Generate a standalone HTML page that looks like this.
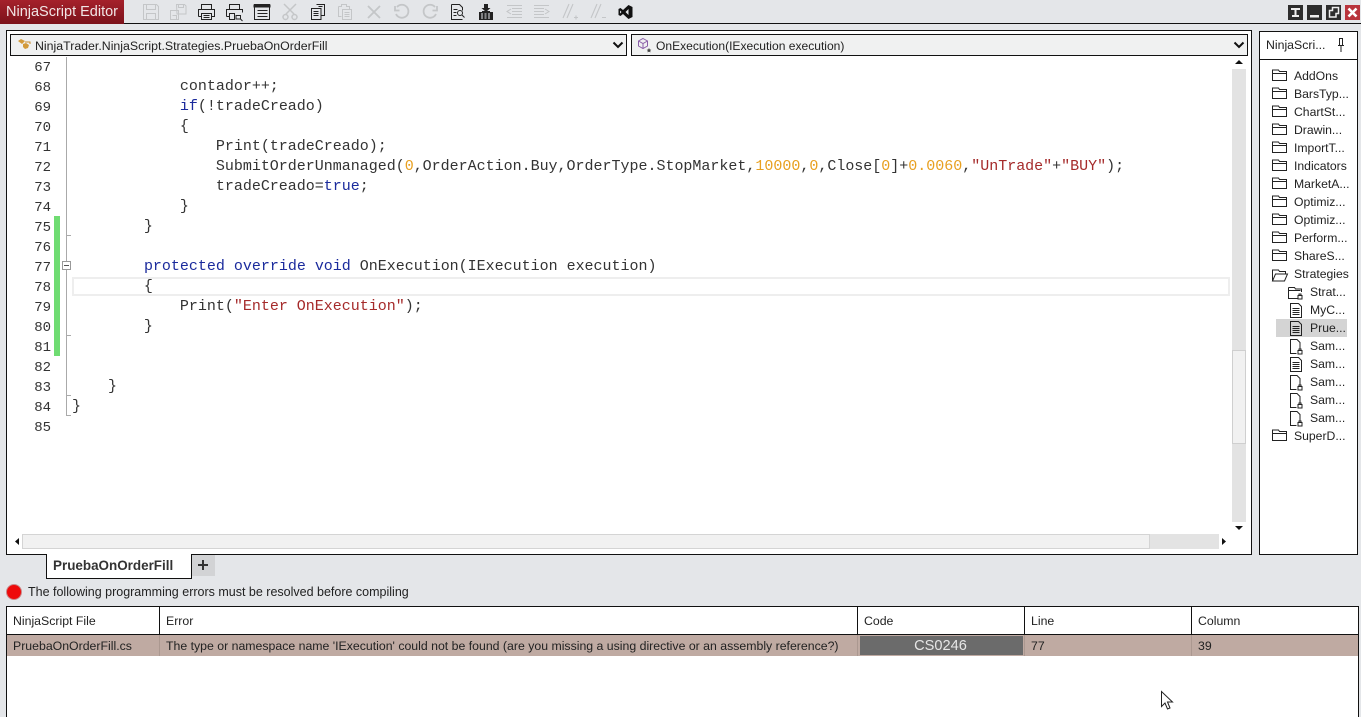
<!DOCTYPE html>
<html><head><meta charset="utf-8"><title>NinjaScript Editor</title>
<style>
*{box-sizing:border-box}
html,body{margin:0;padding:0;width:1361px;height:717px;overflow:hidden;background:#e4e6e9;font-family:"Liberation Sans",sans-serif;color:#222}
.a{position:absolute}
pre{margin:0;font:15px/20px "Liberation Mono",monospace;color:#333}
.k{color:#1a2a9c}.s{color:#a52a2a}.n{color:#e8a020}
.t{position:absolute;font-size:12.2px;line-height:18px;white-space:nowrap;color:#222}
.c{position:absolute;font-size:12.3px;line-height:16px;white-space:nowrap;color:#222}
.ln{position:absolute;left:20px;width:31px;text-align:right;font:14px/20px "Liberation Mono",monospace;color:#333}
</style></head><body>
<!-- title -->
<div class="a" style="left:0;top:23px;width:1361px;height:1px;background:#111"></div>
<div class="a" style="left:0;top:0;width:124px;height:24px;background:linear-gradient(#a5212b,#7b121b)"></div>
<div class="a" style="left:6px;top:3px;font-size:14.5px;line-height:18px;color:#f1e6e6;white-space:nowrap">NinjaScript Editor</div>
<!-- toolbar icons -->
<svg class="a" style="left:135px;top:0" width="510" height="23" viewBox="135 0 510 23" fill="none" stroke-width="1">
<g stroke="#c4c6c8">
<path d="M143.500 4.500h13l2 2v13h-15zM146.500 4.500v5h9v-5M146.500 19.500v-6h9v6"/>
<path d="M176.500 4.500h8l1.500 1.500v8h-9zM178.500 4.500v3h5v-3M170.500 10.500h8v9h-8zM172.500 15.500h4v4"/>
</g>
<g stroke="#222">
<path d="M201.500 9.500v-5h10v5M198.500 16.500v-7h16v7h-3M201.500 16.500h-3M201.500 13.500h10v6h-10zM203.500 15.500h6M203.500 17.500h6"/>
<path d="M229.500 9.500v-5h10v5M226.500 16.500v-7h16v3M229.500 16.500h-3M229.500 13.500h5v6h-5z"/>
<path d="M236 15.500h4.500v3.500h-4.500z M240.500 19l2 2"/>
<path d="M254.500 4.500h15v15h-15zM257.500 10.500h10M257.500 13.500h10M257.500 16.500h10"/>
<path d="M254 5h16v2H254z" fill="#222"/>
</g>
<g stroke="#c4c6c8" stroke-width="1.500">
<path d="M284 4l10 10M296 4l-10 10"/><circle cx="285.500" cy="17" r="2.500"/><circle cx="294.500" cy="17" r="2.500"/>
</g>
<g stroke="#222">
<path d="M316.500 4.500h8v11h-3M311.500 8.500h9.500v11h-9.500zM313.500 11.500h5M313.500 13.500h5M313.500 15.500h5M318.500 6.500h4"/>
</g>
<g stroke="#c4c6c8">
<path d="M338.500 6.500h3v-2h5v2h3v3M338.500 6.500v10h3M342.500 9.500h9v10h-9zM344.500 12.500h5M344.500 14.500h5M344.500 16.500h5"/>
</g>
<g stroke="#c4c6c8" stroke-width="1.800">
<path d="M368 6l12 12M380 6l-12 12"/>
<path d="M397 7a6.500 6.500 0 1 1-1 7M395 6v4.500h4.500"/>
<path d="M435 7a6.500 6.500 0 1 0 1 7M437 6v4.500h-4.500"/>
</g>
<g stroke="#222">
<path d="M451.500 4.500h8l3 3v3M451.500 4.500v15h11M453.500 9.500h4M453.500 12.500h3M453.500 15.500h3"/>
<circle cx="460" cy="13" r="2.500"/><path d="M462 15l2.500 2.500"/>
</g>
<path d="M484 4h4v4h2.500l-4.500 4-4.500-4h2.500z" fill="#222"/>
<path d="M479 12h3v-1h8v1h3v8h-14z" fill="#222"/>
<path d="M481 14h2M484.500 14h2M488 14h2M481 16h2M484.500 16h2M488 16h2M481 18h2M484.500 18h2M488 18h2" stroke="#e4e6e9"/>
<g stroke="#c4c6c8">
<path d="M507 5.500h15M512 8.500h10M512 11.500h10M512 14.500h10M507 17.500h15M511 9l-4 2.500 4 2.500"/>
<path d="M534 5.500h15M534 8.500h10M534 11.500h10M534 14.500h10M534 17.500h15M545 9l4 2.500-4 2.500"/>
<path d="M563 18l6-14M567 18l6-14M574 17.500h4M576 15.500v4" stroke-width="1.100"/>
<path d="M591 18l6-14M595 18l6-14M602 17.500h4" stroke-width="1.100"/>
</g>
<path d="M628.500 5l4 2v10l-4 2-5.500-5-2.500 2-2-1v-6l2-1 2.500 2zM628.500 9l-3 3 3 3zM620 10.500v3l1.500-1.500z" fill="#111" fill-rule="evenodd"/>
</svg>
<!-- window buttons -->
<svg class="a" style="left:1285px;top:3px" width="76" height="18" viewBox="0 0 76 18">
<rect x="3" y="2" width="15" height="15" fill="#2d2d2d"/><path d="M6 5h9v2H6zM9.500 7h2v5h-2zM7 12h7v2H7z" fill="#eee"/>
<rect x="22" y="2" width="15" height="15" fill="#2d2d2d"/><path d="M25 12h9v2.500h-9z" fill="#eee"/>
<rect x="41" y="2" width="15" height="15" fill="#2d2d2d"/><path d="M47.500 4.500h6v6h-2.500v3.500h-6.500v-6.500h3z" fill="none" stroke="#eee" stroke-width="1.500"/>
<rect x="60" y="2" width="15" height="15" fill="#b9343c"/><path d="M63.500 5.500l8 8M71.500 5.500l-8 8" stroke="#fff" stroke-width="2.600"/>
</svg>
<!-- editor panel -->
<div class="a" style="left:6px;top:30px;width:1246px;height:525px;background:#fff;border:1px solid #111"></div>
<!-- dropdowns -->
<div class="a" style="left:10px;top:34px;width:617px;height:22px;background:#f0f1f1;border:1px solid #111"></div>
<div class="a" style="left:631px;top:34px;width:617px;height:22px;background:#f0f1f1;border:1px solid #111"></div>
<svg class="a" style="left:16px;top:37px" width="16" height="16" viewBox="0 0 16 16"><path d="M2 4l3-2 4 2 -3 3zM7 7l3-1 3 2-1 3-3 1-2-2z" fill="#d39a3a"/><path d="M9 5h5v2" stroke="#c98a2a" fill="none"/></svg>
<div class="a" style="left:35px;top:37px;font-size:12.35px;line-height:18px;white-space:nowrap;color:#222">NinjaTrader.NinjaScript.Strategies.PruebaOnOrderFill</div>
<svg class="a" style="left:612px;top:41px" width="12" height="9" viewBox="0 0 12 9"><path d="M1.500 1.500L6 6l4.500-4.500" fill="none" stroke="#111" stroke-width="2"/></svg>
<svg class="a" style="left:637px;top:37px" width="16" height="16" viewBox="0 0 16 16"><path d="M6 1.500l4.500 2.500v5l-4.500 2.500-4.500-2.500v-5zM1.500 4l4.500 2.500 4.500-2.500M6 6.500v5" fill="none" stroke="#8a5fa8"/><path d="M12 11l.8 1.500 1.500.3-1.100 1 .3 1.600-1.500-.8-1.500.8.300-1.600-1.100-1 1.500-.3z" fill="#444"/></svg>
<div class="a" style="left:656px;top:37px;font-size:12.07px;line-height:18px;white-space:nowrap;color:#222">OnExecution(IExecution execution)</div>
<svg class="a" style="left:1233px;top:41px" width="12" height="9" viewBox="0 0 12 9"><path d="M1.500 1.500L6 6l4.500-4.500" fill="none" stroke="#111" stroke-width="2"/></svg>
<!-- gutter -->
<div class="a" style="left:54px;top:216px;width:6px;height:140px;background:#6fdc72"></div>
<div class="a" style="left:66px;top:57px;width:1px;height:358px;background:#aaa"></div>
<div class="a" style="left:66px;top:235px;width:5px;height:1px;background:#aaa"></div>
<div class="a" style="left:66px;top:335px;width:5px;height:1px;background:#aaa"></div>
<div class="a" style="left:66px;top:395px;width:5px;height:1px;background:#aaa"></div>
<div class="a" style="left:66px;top:415px;width:5px;height:1px;background:#aaa"></div>
<div class="a" style="left:62px;top:261px;width:9px;height:9px;background:#fff;border:1px solid #999"></div>
<div class="a" style="left:64px;top:265px;width:5px;height:1px;background:#555"></div>
<div class="a" style="left:72px;top:277px;width:1158px;height:19px;border:2px solid #eee"></div>
<div class="ln" style="top:58px">67</div><div class="ln" style="top:78px">68</div><div class="ln" style="top:98px">69</div><div class="ln" style="top:118px">70</div><div class="ln" style="top:138px">71</div><div class="ln" style="top:158px">72</div><div class="ln" style="top:178px">73</div><div class="ln" style="top:198px">74</div><div class="ln" style="top:218px">75</div><div class="ln" style="top:238px">76</div><div class="ln" style="top:258px">77</div><div class="ln" style="top:278px">78</div><div class="ln" style="top:298px">79</div><div class="ln" style="top:318px">80</div><div class="ln" style="top:338px">81</div><div class="ln" style="top:358px">82</div><div class="ln" style="top:378px">83</div><div class="ln" style="top:398px">84</div><div class="ln" style="top:418px">85</div>
<!-- code -->
<pre class="a" style="left:72px;top:57px;letter-spacing:-.01px">

            contador++;
            <span class="k">if</span>(!tradeCreado)
            {
                Print(tradeCreado);
                SubmitOrderUnmanaged(<span class="n">0</span>,OrderAction.Buy,OrderType.StopMarket,<span class="n">10000</span>,<span class="n">0</span>,Close[<span class="n">0</span>]+<span class="n">0.0060</span>,<span class="s">"UnTrade"</span>+<span class="s">"BUY"</span>);
                tradeCreado=<span class="k">true</span>;
            }
        }

        <span class="k">protected</span> <span class="k">override</span> <span class="k">void</span> OnExecution(IExecution execution)
        {
            Print(<span class="s">"Enter OnExecution"</span>);
        }


    }
}</pre>
<!-- vertical scrollbar -->
<div class="a" style="left:1232px;top:57px;width:14px;height:477px;background:#e3e3e3"></div>
<div class="a" style="left:1232px;top:57px;width:14px;height:12px;background:#fff"></div>
<div class="a" style="left:1232px;top:522px;width:14px;height:12px;background:#fff"></div>
<div class="a" style="left:1232px;top:350px;width:14px;height:94px;background:#f1f1f1;border:1px solid #cfcfcf"></div>
<svg class="a" style="left:1232px;top:57px" width="14" height="477" viewBox="0 0 14 477"><path d="M7 3l4 4H3zM7 473l4-4H3z" fill="#111"/></svg>
<!-- horizontal scrollbar -->
<div class="a" style="left:12px;top:534px;width:1217px;height:15px;background:#fff"></div>
<div class="a" style="left:22px;top:534px;width:1197px;height:15px;background:#e3e3e3"></div>
<div class="a" style="left:22px;top:534px;width:1128px;height:15px;background:#f1f1f1;border:1px solid #d4d4d4"></div>
<svg class="a" style="left:12px;top:534px" width="1217" height="15" viewBox="0 0 1217 15"><path d="M3 7.500L7 4v7zM1214 7.500L1210 4v7z" fill="#111"/></svg>
<!-- right panel -->
<div class="a" style="left:1259px;top:31px;width:99px;height:524px;background:#fff;border:1px solid #111"></div>
<div class="a" style="left:1260px;top:59px;width:97px;height:1px;background:#111"></div>
<div class="a" style="left:1266px;top:37px;font-size:12.3px;line-height:17px;white-space:nowrap;color:#222">NinjaScri...</div>
<svg class="a" style="left:1336px;top:37px" width="10" height="16" viewBox="0 0 10 16"><path d="M3.500 1.500h3v7h-3zM2 8.500h6M5 9v6" fill="none" stroke="#222"/></svg>
<div class="a" style="left:1276px;top:319px;width:71px;height:18px;background:#d4d4d4"></div>
<div class="t" style="left:1294px;top:67px">AddOns</div>
<div class="t" style="left:1294px;top:85px">BarsTyp...</div>
<div class="t" style="left:1294px;top:103px">ChartSt...</div>
<div class="t" style="left:1294px;top:121px">Drawin...</div>
<div class="t" style="left:1294px;top:139px">ImportT...</div>
<div class="t" style="left:1294px;top:157px">Indicators</div>
<div class="t" style="left:1294px;top:175px">MarketA...</div>
<div class="t" style="left:1294px;top:193px">Optimiz...</div>
<div class="t" style="left:1294px;top:211px">Optimiz...</div>
<div class="t" style="left:1294px;top:229px">Perform...</div>
<div class="t" style="left:1294px;top:247px">ShareS...</div>
<div class="t" style="left:1294px;top:265px">Strategies</div>
<div class="t" style="left:1310px;top:283px">Strat...</div>
<div class="t" style="left:1310px;top:301px">MyC...</div>
<div class="t" style="left:1310px;top:319px">Prue...</div>
<div class="t" style="left:1310px;top:337px">Sam...</div>
<div class="t" style="left:1310px;top:355px">Sam...</div>
<div class="t" style="left:1310px;top:373px">Sam...</div>
<div class="t" style="left:1310px;top:391px">Sam...</div>
<div class="t" style="left:1310px;top:409px">Sam...</div>
<div class="t" style="left:1294px;top:427px">SuperD...</div>
<svg class="a" style="left:1270px;top:67px" width="45" height="380" viewBox="0 0 45 380" fill="none" stroke="#222">
<defs>
<path id="f" d="M2.500 4.500v-1.500h6l1 1.500h7v9h-14zM2.500 6.500h14"/>
<path id="d" d="M20.500 0.500h8l3 3v11h-11zM22.500 5.500h7M22.500 7.500h7M22.500 9.500h7M22.500 11.500h7"/>
<path id="l" d="M26.500 14.500h-6v-14h6.500l3 3v6M28 11.500h4v3.500h-4zM29 11.500v-1.500h2v1.500"/>
</defs>
<use href="#f" y="0"/><use href="#f" y="18"/><use href="#f" y="36"/><use href="#f" y="54"/><use href="#f" y="72"/><use href="#f" y="90"/><use href="#f" y="108"/><use href="#f" y="126"/><use href="#f" y="144"/><use href="#f" y="162"/><use href="#f" y="180"/>
<path d="M2.500 214v-11h6l1 1.500h6v2M2.500 214h12l3-7h-12z"/>
<path d="M18.500 220.500h6l1 1.500h6v3M18.500 223.500h12M18.500 220.500v11h9M28 228.500h4v3.500h-4zM29 228.500v-1.500h2v1.500"/>
<use href="#d" y="236"/><use href="#d" y="254"/>
<use href="#l" y="272"/><use href="#d" y="290"/><use href="#l" y="308"/><use href="#l" y="326"/><use href="#l" y="344"/>
<use href="#f" y="360"/>
</svg>
<!-- tab -->
<div class="a" style="left:46px;top:554px;width:146px;height:25px;background:#fff;border:1px solid #111;border-top:0"></div>
<div class="a" style="left:53px;top:557px;font-size:13.45px;line-height:18px;font-weight:bold;color:#333;white-space:nowrap">PruebaOnOrderFill</div>
<div class="a" style="left:192px;top:555px;width:23px;height:21px;background:#d2d3d5"></div>
<div class="a" style="left:198px;top:564px;width:10px;height:2px;background:#333"></div>
<div class="a" style="left:202px;top:560px;width:2px;height:10px;background:#333"></div>
<!-- error message -->
<div class="a" style="left:6px;top:584px;width:16px;height:16px;border-radius:50%;background:#ee0b0b;border:1px solid #c9898a"></div>
<div class="a" style="left:28px;top:584px;font-size:12.5px;line-height:16px;white-space:nowrap;color:#222">The following programming errors must be resolved before compiling</div>
<!-- table -->
<div class="a" style="left:6px;top:606px;width:1353px;height:111px;background:#fff;border:1px solid #111;border-bottom:0"></div>
<div class="a" style="left:7px;top:634px;width:1351px;height:1px;background:#111"></div>
<div class="a" style="left:7px;top:635px;width:1351px;height:21px;background:#bfaaa2"></div>
<div class="a" style="left:159px;top:607px;width:1px;height:27px;background:#111"></div>
<div class="a" style="left:857px;top:607px;width:1px;height:27px;background:#111"></div>
<div class="a" style="left:1024px;top:607px;width:1px;height:27px;background:#111"></div>
<div class="a" style="left:1191px;top:607px;width:1px;height:27px;background:#111"></div>
<div class="a" style="left:159px;top:635px;width:1px;height:21px;background:#ab9890"></div>
<div class="a" style="left:857px;top:635px;width:1px;height:21px;background:#ab9890"></div>
<div class="a" style="left:1024px;top:635px;width:1px;height:21px;background:#ab9890"></div>
<div class="a" style="left:1191px;top:635px;width:1px;height:21px;background:#ab9890"></div>
<div class="c" style="left:13px;top:613px">NinjaScript File</div>
<div class="c" style="left:166px;top:613px">Error</div>
<div class="c" style="left:864px;top:613px">Code</div>
<div class="c" style="left:1031px;top:613px">Line</div>
<div class="c" style="left:1198px;top:613px">Column</div>
<div class="c" style="left:13px;top:638px">PruebaOnOrderFill.cs</div>
<div class="c" style="left:166px;top:638px">The type or namespace name 'IExecution' could not be found (are you missing a using directive or an assembly reference?)</div>
<div class="a" style="left:860px;top:636px;width:163px;height:19px;background:#6b6b6b;color:#e6e6e6;font-size:14.6px;line-height:21px;text-align:center;padding-right:2px">CS0246</div>
<div class="c" style="left:1031px;top:638px">77</div>
<div class="c" style="left:1198px;top:638px">39</div>
<!-- cursor -->
<svg class="a" style="left:1160px;top:690px" width="15" height="21" viewBox="0 0 15 21"><path d="M1.500 1.500v15l3.500-3.500 2.500 6 2.500-1-2.500-6h5z" fill="#fff" stroke="#222"/></svg>
</body></html>
